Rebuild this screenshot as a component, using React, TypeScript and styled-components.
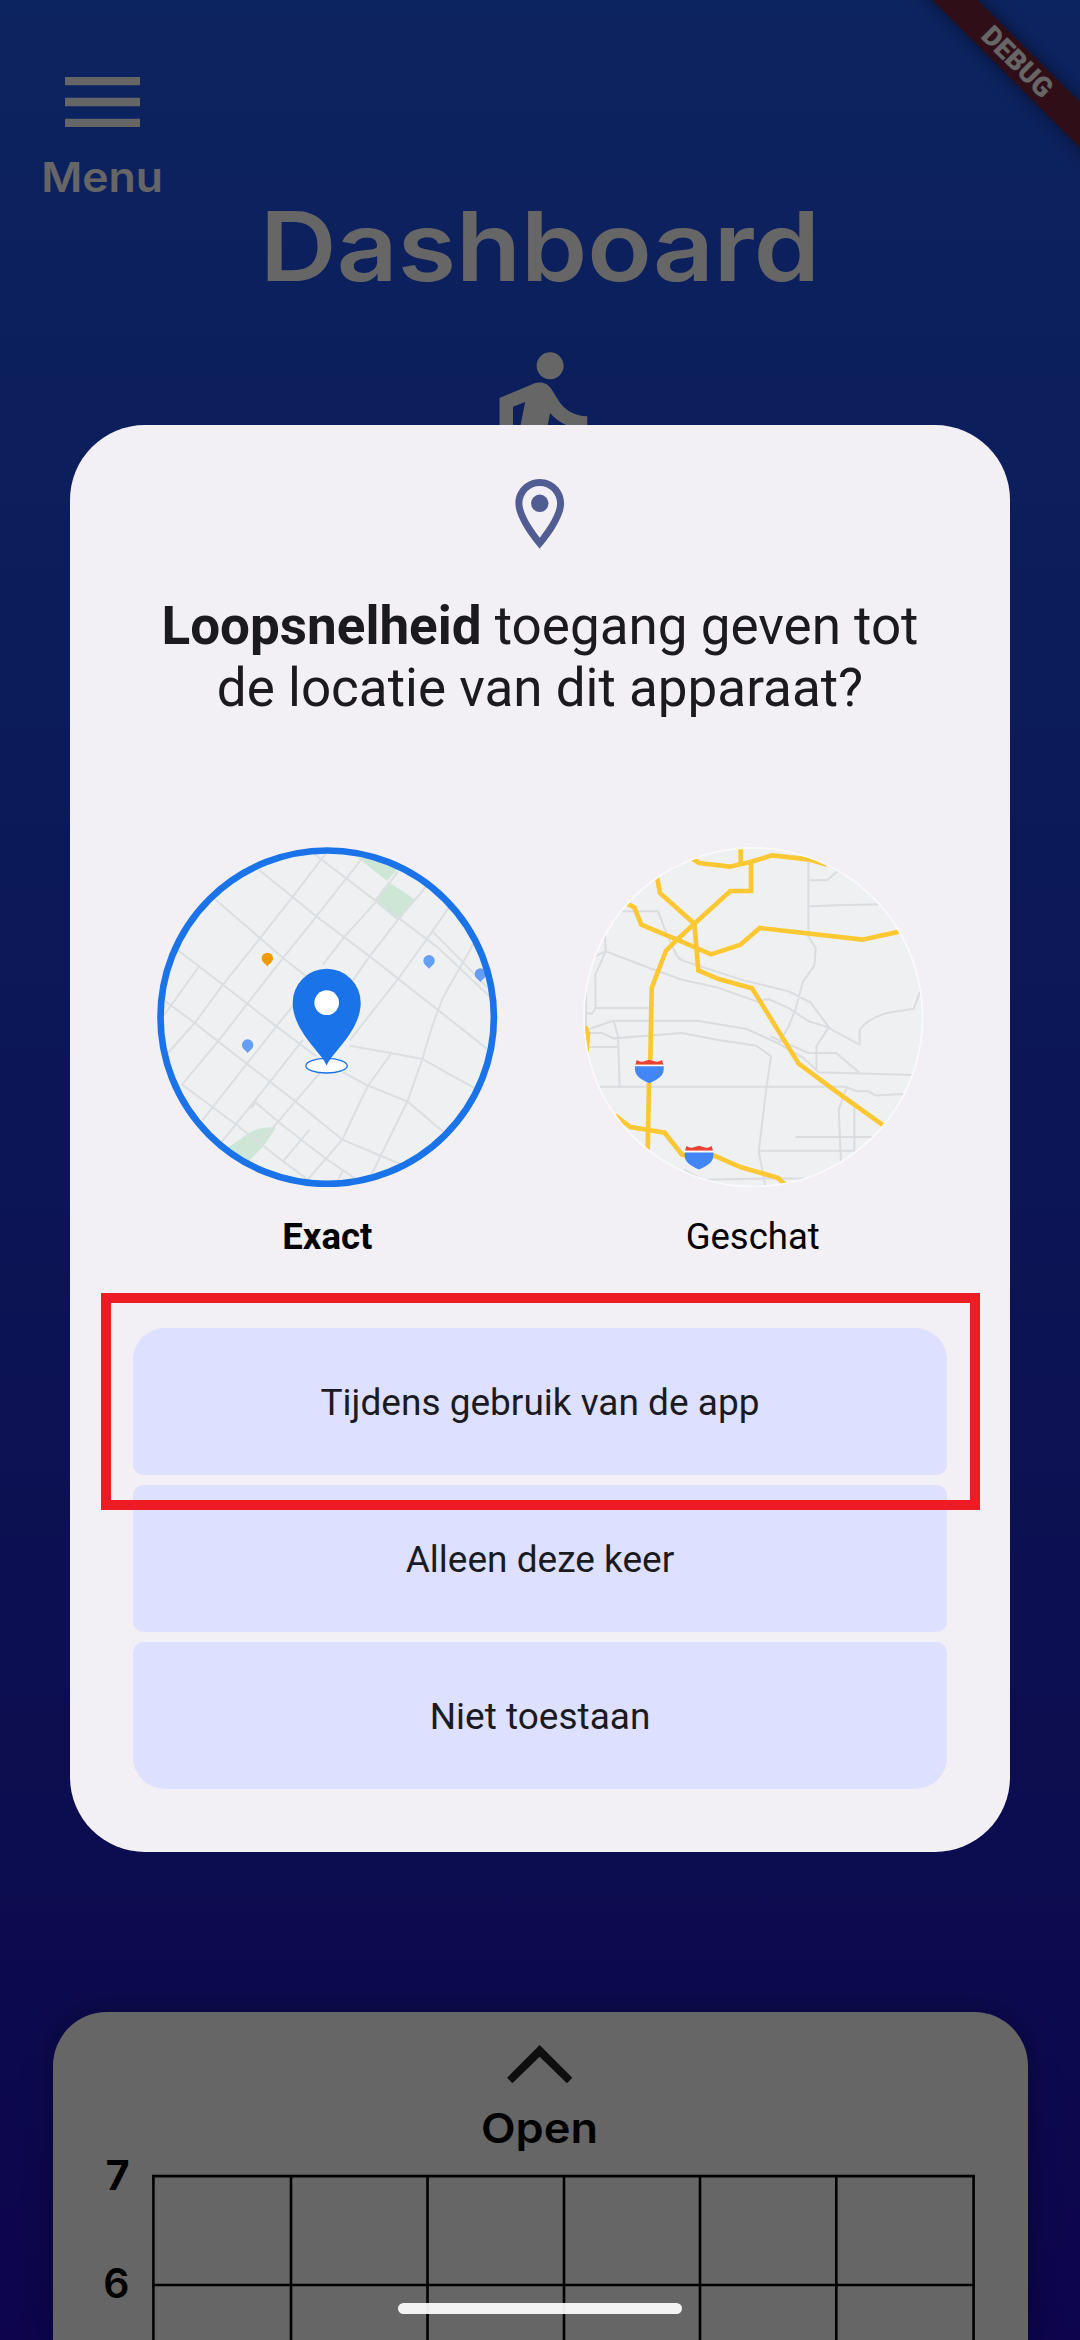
import React from "react";
import styled, { createGlobalStyle } from "styled-components";

const GlobalStyle = createGlobalStyle`
  *, *::before, *::after { box-sizing: border-box; }
  html, body { margin: 0; padding: 0; background: #0d0850; }
  button { font: inherit; border: 0; margin: 0; padding: 0; }
`;

const display = `Inter, Lato, sans-serif`;
const system = `Roboto, "Open Sans", sans-serif`;

/* ---------- dashboard ---------- */

const Screen = styled.div`
  position: relative;
  width: 1080px;
  height: 2340px;
  overflow: hidden;
  display: grid;
`;

const Dashboard = styled.div`
  grid-area: 1 / 1;
  display: flex;
  flex-direction: column;
  height: 2340px;
  background: linear-gradient(180deg, #205af0 0%, #1f23c8 76%, #220cc1 100%);
  font-family: ${display};
  font-weight: 600;
`;

const MenuButton = styled.button`
  display: flex;
  flex-direction: column;
  flex-shrink: 0;
  align-items: center;
  width: 205px;
  height: 188px;
  padding-top: 77px;
  background: none;
  color: #fff;
`;

const MenuIcon = styled.svg`
  flex-shrink: 0;
  width: 75px;
  height: 50px;
`;

const MenuLabel = styled.span`
  margin-top: 25px;
  font-size: 41px;
  line-height: 50px;
  transform: scaleX(1.085);
`;

const PageTitle = styled.h1`
  flex-shrink: 0;
  margin: 0;
  color: #fff;
  font-size: 96.5px;
  font-weight: 600;
  line-height: 116px;
  text-align: center;
  transform: scaleX(1.1);
`;

const WalkIcon = styled.svg`
  flex-shrink: 0;
  width: 162px;
  height: 162px;
  margin: 38px auto 0;
  fill: #fff;
`;

const Sheet = styled.section`
  display: flex;
  flex-direction: column;
  flex-shrink: 0;
  height: 328px;
  margin: auto 52.5px 0;
  padding-top: 32.7px;
  border-radius: 54px 54px 0 0;
  background: #fff;
  box-shadow: 0 0 32px rgba(0, 0, 0, 0.3);
  color: #000;
`;

const Chevron = styled.svg`
  flex-shrink: 0;
  width: 65.3px;
  height: 38.3px;
  margin: 0 auto;
  fill: #252525;
`;

const OpenLabel = styled.span`
  flex-shrink: 0;
  margin: 20px 0 0 -2px;
  font-size: 41px;
  line-height: 50px;
  text-align: center;
  transform: scaleX(1.1);
`;

const Chart = styled.div`
  display: flex;
  flex-shrink: 0;
  align-items: flex-start;
  margin-top: -3px;
`;

const Axis = styled.div`
  display: flex;
  flex-direction: column;
  width: 77px;
  text-align: right;
`;

const Tick = styled.span<{ $heavy?: boolean }>`
  height: 108px;
  font-size: 41px;
  line-height: 50px;
  font-weight: ${(p) => (p.$heavy ? 700 : 600)};
`;

const ChartLines = styled.svg`
  width: 824px;
  height: 166px;
  margin: 24px 0 0 22.5px;
`;

const Ribbon = styled.div`
  position: absolute;
  top: 46px;
  right: -87px;
  width: 300px;
  height: 32.4px;
  transform: rotate(45deg);
  background: #79233e;
  box-shadow: 0 0 18px rgba(0, 0, 0, 0.5);
  color: #fff;
  font-family: ${system};
  font-size: 27.5px;
  font-weight: 900;
  line-height: 32.4px;
  text-align: center;
`;

/* ---------- permission dialog ---------- */

const Scrim = styled.div`
  position: absolute;
  inset: 0;
  display: flex;
  flex-direction: column;
  align-items: center;
  padding-top: 425px;
  background: rgba(0, 0, 0, 0.6);
`;

const Dialog = styled.section`
  display: flex;
  flex-direction: column;
  align-items: center;
  width: 940px;
  height: 1427px;
  padding-top: 47px;
  border-radius: 75px;
  background: #f2eff5;
  color: #1b1b1f;
  font-family: ${system};
`;

const PinIcon = styled.svg`
  width: 83.5px;
  height: 83.5px;
  fill: #505c92;
`;

const Question = styled.h2`
  margin: 39.5px 0 0;
  font-size: 53px;
  font-weight: 400;
  line-height: 62px;
  text-align: center;

  strong { font-weight: 700; }
`;

const Options = styled.div`
  display: flex;
  gap: 85px;
  margin-top: 128px;
`;

const Option = styled.div<{ $selected?: boolean }>`
  display: flex;
  flex-direction: column;
  align-items: center;
  gap: 28px;
  color: #000;
  font-size: 36.5px;
  line-height: 44px;
  font-weight: ${(p) => (p.$selected ? 700 : 400)};
`;

const MapDisc = styled.svg`
  width: 340.4px;
  height: 340.4px;
`;

const Actions = styled.div`
  display: flex;
  flex-direction: column;
  gap: 10px;
  margin-top: 68.6px;
`;

const Action = styled.button<{ $edge?: "top" | "bottom" }>`
  width: 814px;
  height: 147px;
  padding-top: 3px;
  border-radius: ${(p) =>
    p.$edge === "top"
      ? "32px 32px 11px 11px"
      : p.$edge === "bottom"
      ? "11px 11px 32px 32px"
      : "11px"};
  background: #dde0ff;
  color: #1b1b1f;
  font-size: 37px;
  line-height: 44px;
`;

const Highlight = styled.div`
  position: absolute;
  top: 1293px;
  left: 101px;
  width: 879px;
  height: 217px;
  border: 10px solid #ed1c24;
`;

const HomeBar = styled.div`
  position: absolute;
  left: 398px;
  bottom: 26px;
  width: 284px;
  height: 11px;
  border-radius: 6px;
  background: rgba(255, 255, 255, 0.92);
`;

const STREETS = [
  "M490 40 680 185 860 320 1025 475",
  "M328 90 500 230 660 350 870 515 1018 632",
  "M198 180 400 355 470 410",
  "M83 330 220 435 380 560 500 650",
  "M45 483 135 550 205 605 437 785 578 900 750 972",
  "M95 733 260 855 400 965 478 1022",
  "M318 788 390 850 530 958 625 1022",
  "M580 698 655 738 773 785 885 880",
  "M600 618 722 640 818 658 980 748",
  "M848 275 940 368 1015 445",
  "M42 528 150 378",
  "M52 643 135 550 220 435 330 297 430 170 528 42",
  "M95 737 205 605 400 355 500 230 585 122 638 55",
  "M158 842 380 560 460 460",
  "M520 375 585 290 680 185 745 95",
  "M215 908 360 727 460 600",
  "M600 435 660 350 745 240 832 138",
  "M335 905 437 785 510 700",
  "M600 602 745 418 848 275 898 203",
  "M318 788 305 806",
  "M400 965 480 870",
  "M472 1022 578 900 Q600 850 655 738 L722 645",
  "M665 1005 773 785 818 658 Q860 510 890 455 L940 368 975 305",
  "M565 1022 578 995",
];

const LANES = [
  "M714 60V290L736 325 732 378 698 425 675 510 655 560 625 612",
  "M718 122H770L805 92",
  "M718 200 800 197 930 194",
  "M148 215H263L290 285 315 340 Q325 360 345 365L520 422 655 455 720 488 780 568 868 615V570Q895 535 950 520L1030 507 1055 440",
  "M104 285 106 335 75 405 76 505 65 522 45 520 47 450V580",
  "M75 350 106 335 245 388 335 420 440 443 560 485 595 478 655 505 715 545 775 563 738 620V690",
  "M76 505H240",
  "M50 570 128 543H380L530 568 625 612 700 655 745 698 1025 706",
  "M55 580H95L130 596 335 580 440 600 558 618 602 650 588 745 565 935 585 1040",
  "M130 543 143 590 148 740",
  "M55 622H143",
  "M85 741H825L860 755H895L915 767 1000 763",
  "M600 590 715 640H798L868 700",
  "M828 745 805 810 812 970",
  "M852 800V933H568",
  "M675 892H905",
  "M340 990 400 1020 600 1016H715",
];

const HIGHWAYS = [
  "M368 58 386 70 478 81 540 67 606 47 720 60 770 75",
  "M511 22V70",
  "M542 65V154H480L372 252 320 300 287 333 244 445 240 660",
  "M236 730 232 935",
  "M260 112 269 160 372 252 384 392 445 418 545 446 685 672 810 765 940 858",
  "M170 192 192 203 213 255 320 300 422 344 510 315 568 265 876 300 990 275",
  "M45 560 53 585 48 640",
  "M135 828 180 862 283 879 335 945 350 947",
  "M425 945 510 982 622 1014 645 1035",
];

function SmallPin({ x, y, color }: { x: number; y: number; color: string }) {
  return (
    <path
      transform={`translate(${x} ${y})`}
      d="M0 24C-4 15-17 12-17-1A17 17 0 0 1 17-1C17 12 4 15 0 24Z"
      fill={color}
    />
  );
}

function Shield({ x, y }: { x: number; y: number }) {
  return (
    <g transform={`translate(${x} ${y})`}>
      <path
        d="M-38 0Q-26 9-13 3L0-1 13 3Q26 9 38 0L42 14H-42Z"
        fill="#ea4335"
      />
      <path d="M-42 14H42L43 20H-43Z" fill="#fff" />
      <path
        d="M-43 19H43C47 50 22 59 0 70C-22 59-47 50-43 19Z"
        fill="#4285f4"
      />
    </g>
  );
}

function ExactMap() {
  return (
    <MapDisc viewBox="22 22 1021 1021">
      <clipPath id="exact-disc">
        <circle cx="532.5" cy="532.5" r="500" />
      </clipPath>
      <g clipPath="url(#exact-disc)">
        <rect x="22" y="22" width="1021" height="1021" fill="#eef0f2" />
        <g fill="#cee6d5">
          <path d="M610 42 712 124 750 80 700 40Z" />
          <path d="M716 127 797 180 745 243 672 184Z" />
          <path d="M235 922Q265 905 290 885Q325 860 378 863Q350 915 295 965L240 950Z" />
        </g>
        <path
          d={STREETS.join("")}
          fill="none"
          stroke="#dcdfe2"
          strokeWidth="6"
        />
        <SmallPin x={353} y={357} color="#f29900" />
        <SmallPin x={838} y={364} color="#669df6" />
        <SmallPin x={992} y={404} color="#669df6" />
        <SmallPin x={294} y={617} color="#669df6" />
      </g>
      <circle
        cx="532.5"
        cy="532.5"
        r="500"
        fill="none"
        stroke="#1a73e8"
        strokeWidth="20"
      />
      <ellipse
        cx="530.5"
        cy="678"
        rx="62"
        ry="22"
        fill="#fff"
        stroke="#1a73e8"
        strokeWidth="4"
      />
      <path
        d="M531 678C518 640 429 575 429 489A102 102 0 0 1 633 489C633 575 544 640 531 678Z"
        fill="#1a73e8"
      />
      <circle cx="531" cy="489" r="37" fill="#fff" />
    </MapDisc>
  );
}

function ApproximateMap() {
  return (
    <MapDisc viewBox="38 22 1021 1021">
      <clipPath id="approximate-disc">
        <circle cx="548.5" cy="532.5" r="508" />
      </clipPath>
      <g clipPath="url(#approximate-disc)">
        <rect x="38" y="22" width="1021" height="1021" fill="#eef0f2" />
        <path
          d={LANES.join("")}
          fill="none"
          stroke="#dadce0"
          strokeWidth="6"
        />
        <path
          d={HIGHWAYS.join("")}
          fill="none"
          stroke="#fbc834"
          strokeWidth="14"
        />
        <Shield x={237} y={661} />
        <Shield x={386} y={919} />
      </g>
      <circle
        cx="548.5"
        cy="532.5"
        r="508"
        fill="none"
        stroke="#fafafc"
        strokeWidth="5"
      />
    </MapDisc>
  );
}

export default function App() {
  return (
    <Screen>
      <GlobalStyle />
      <Dashboard>
        <MenuButton>
          <MenuIcon viewBox="3 6 18 12" fill="currentColor">
            <path d="M3 18h18v-2H3v2zm0-5h18v-2H3v2zm0-7v2h18V6H3z" />
          </MenuIcon>
          <MenuLabel>Menu</MenuLabel>
        </MenuButton>
        <PageTitle>Dashboard</PageTitle>
        <WalkIcon viewBox="0 0 24 24">
          <path d="M13.5 5.5c1.1 0 2-.9 2-2s-.9-2-2-2-2 .9-2 2 .9 2 2 2zM9.8 8.9L7 23h2.1l1.8-8 2.1 2v6h2v-7.5l-2.1-2 .6-3C14.8 12 16.8 13 19 13v-2c-1.9 0-3.5-1-4.3-2.4l-1-1.6c-.4-.6-1-1-1.7-1-.3 0-.5.1-.8.1L6 8.3V13h2V9.6l1.8-.7" />
        </WalkIcon>
        <Sheet>
          <Chevron viewBox="0 0 196 115">
            <path d="M98 0 196 98 180 115 98 35 16 115 0 98Z" />
          </Chevron>
          <OpenLabel>Open</OpenLabel>
          <Chart>
            <Axis>
              <Tick $heavy>7</Tick>
              <Tick>6</Tick>
            </Axis>
            <ChartLines viewBox="0 0 824 166">
              <g fill="none" stroke="#000" strokeWidth="2.6">
                <path d="M0 2.1H823M0 111H823" />
                {[1.4, 139, 275.5, 412, 548, 684.3, 821.6].map((x) => (
                  <path key={x} d={`M${x} 1V166`} />
                ))}
              </g>
            </ChartLines>
          </Chart>
        </Sheet>
        <Ribbon>DEBUG</Ribbon>
      </Dashboard>

      <Scrim>
        <Dialog>
          <PinIcon viewBox="0 0 24 24">
            <path d="M12 2C8.13 2 5 5.13 5 9c0 5.25 7 13 7 13s7-7.75 7-13c0-3.87-3.13-7-7-7zM7 9c0-2.76 2.24-5 5-5s5 2.24 5 5c0 2.88-2.88 7.19-5 9.88C9.92 16.21 7 11.85 7 9z" />
            <circle cx="12" cy="9" r="2.5" />
          </PinIcon>
          <Question>
            <strong>Loopsnelheid</strong> toegang geven tot
            <br />
            de locatie van dit apparaat?
          </Question>
          <Options>
            <Option $selected>
              <ExactMap />
              <span>Exact</span>
            </Option>
            <Option>
              <ApproximateMap />
              <span>Geschat</span>
            </Option>
          </Options>
          <Actions>
            <Action $edge="top">Tijdens gebruik van de app</Action>
            <Action>Alleen deze keer</Action>
            <Action $edge="bottom">Niet toestaan</Action>
          </Actions>
        </Dialog>
      </Scrim>
      <Highlight />
      <HomeBar />
    </Screen>
  );
}
